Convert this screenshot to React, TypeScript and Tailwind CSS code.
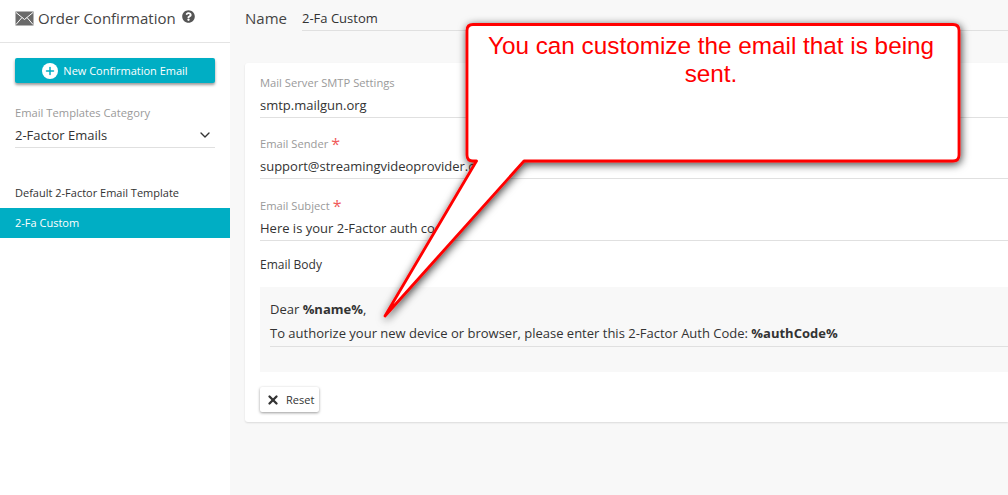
import { Plus, X, ChevronDown } from "lucide-react";
import { FaQuestionCircle } from "react-icons/fa";

const font = { fontFamily: '"Open Sans", sans-serif' };

function Field({ label, value, required, top }: { label: string; value: string; required?: boolean; top: string }) {
  return (
    <div className={top}>
      <div className="flex h-[17px] items-center gap-[3px] pb-[2px] text-[11.200px] leading-[15px] text-[#9a9a9a]">
        {label}
        {required && <span className="text-base leading-none text-[#f05a5a]">*</span>}
      </div>
      <div className="mt-[3px] h-[23px] border-b border-[#e0e0e0] text-[13px] leading-[20px] text-[#333]">{value}</div>
    </div>
  );
}

function MailIcon() {
  return (
    <svg width="19" height="15" viewBox="0 0 19 15" className="shrink-0">
      <rect x="0.500" y="0.500" width="18" height="14" fill="#6a6a6a" />
      <path d="M1 1.500 L9.500 8.500 L18 1.500 M1 13.500 L7 6.500 M18 13.500 L12 6.500" fill="none" stroke="#fff" strokeWidth="1" />
    </svg>
  );
}

function Callout() {
  return (
    <div className="absolute left-0 top-0 h-[495px] w-[1008px]">
      <svg width="1008" height="495" className="absolute left-0 top-0">
        <defs>
          <filter id="shadow" x="-10%" y="-10%" width="120%" height="130%">
            <feDropShadow dx="1" dy="2" stdDeviation="4" floodColor="#000" floodOpacity="0.75" />
          </filter>
        </defs>
        <path
          d="M473 24.500 H953 Q959 24.500 959 30.500 V155 Q959 161 953 161 H524 L385 316 L476.500 161 H473 Q467 161 467 155 V30.500 Q467 24.500 473 24.500 Z"
          fill="#fff"
          stroke="#ff0000"
          strokeWidth="2.800"
          strokeLinejoin="round"
          filter="url(#shadow)"
        />
      </svg>
      <div
        className="absolute left-[480px] top-[32px] w-[462px] text-center text-[24.300px] leading-[28px] text-[#ff0000]"
        style={{ fontFamily: '"Liberation Sans", sans-serif' }}
      >
        You can customize the email that is being sent.
      </div>
    </div>
  );
}

export default function App() {
  return (
    <div className="relative flex h-[495px] w-[1008px] overflow-hidden bg-[#f8f8f8]" style={font}>
      <aside className="w-[230px] shrink-0 bg-white">
        <div className="flex h-[43px] items-center border-b border-[#e4e4e4] pb-[6px] pl-[15px]">
          <MailIcon />
          <span className="ml-[4px] text-[15px] text-[#444]">Order Confirmation</span>
          <FaQuestionCircle size={13} className="mb-[3px] ml-[6px] text-[#555]" />
        </div>
        <button className="ml-[15px] mt-[15px] flex h-[25px] w-[200px] items-center justify-center rounded-[2px] bg-[#00aec4] text-[11px] text-white shadow-[0_2px_3px_rgba(0,0,0,0.4)]">
          <span className="mr-[5px] flex h-4 w-4 items-center justify-center rounded-full bg-white">
            <Plus size={12} strokeWidth={3} className="text-[#00aec4]" />
          </span>
          <span className="pt-px">New Confirmation Email</span>
        </button>
        <div className="mx-[15px] mt-[21px]">
          <div className="h-[17px] text-[11.200px] leading-[17px] text-[#9a9a9a]">Email Templates Category</div>
          <div className="mt-[2px] flex h-[25px] items-center justify-between border-b border-[#e0e0e0] pr-[2px] text-[13px] text-[#333]">
            <span className="pt-[2px]">2-Factor Emails</span>
            <ChevronDown size={16} className="text-[#333]" />
          </div>
        </div>
        <div className="mt-[30px] flex h-[30px] items-center pl-[15px] text-[11px] text-[#333]">
          Default 2-Factor Email Template
        </div>
        <div className="flex h-[30px] items-center bg-[#00aec4] pl-[15px] text-[11px] text-white">2-Fa Custom</div>
      </aside>

      <main className="min-w-0 flex-1 pl-[15px]">
        <div className="flex h-[31px] items-start pt-[8px]">
          <span className="w-[57px] text-[15px] leading-5 text-[#444]">Name</span>
          <div className="h-[23px] flex-1 border-b border-[#e0e0e0] text-[13px] leading-[20px] text-[#333]">2-Fa Custom</div>
        </div>
        <section className="mt-[32px] h-[359px] rounded-l-[3px] bg-white pl-[15px] pt-[12px] shadow-[0_1px_2px_rgba(0,0,0,0.12)]">
          <Field label="Mail Server SMTP Settings" value="smtp.mailgun.org" top="" />
          <Field label="Email Sender" value="support@streamingvideoprovider.com" required top="mt-[18px]" />
          <Field label="Email Subject" value="Here is your 2-Factor auth code" required top="mt-[19px]" />
          <div className="mt-[15px] text-xs leading-[17px] text-[#333]">Email Body</div>
          <div className="mt-[14px] h-[85px] bg-[#f8f8f8] pl-[10px] pt-[13px] text-[13px] text-[#333]">
            <div className="h-[18px] leading-[18px]">
              Dear <b>%name%</b>,
            </div>
            <div className="mt-[6px] h-[23px] border-b border-[#e0e0e0] leading-[18px]">
              To authorize your new device or browser, please enter this 2-Factor Auth Code: <b>%authCode%</b>
            </div>
          </div>
          <button className="mt-[15px] flex h-[25px] w-[59px] items-center rounded-[2px] bg-white pl-[6px] text-[11px] text-[#333] shadow-[0_1px_3px_rgba(0,0,0,0.4)]">
            <X size={14} strokeWidth={4} className="mr-[6px] text-[#333]" />
            <span className="pt-px">Reset</span>
          </button>
        </section>
      </main>

      <Callout />
    </div>
  );
}
